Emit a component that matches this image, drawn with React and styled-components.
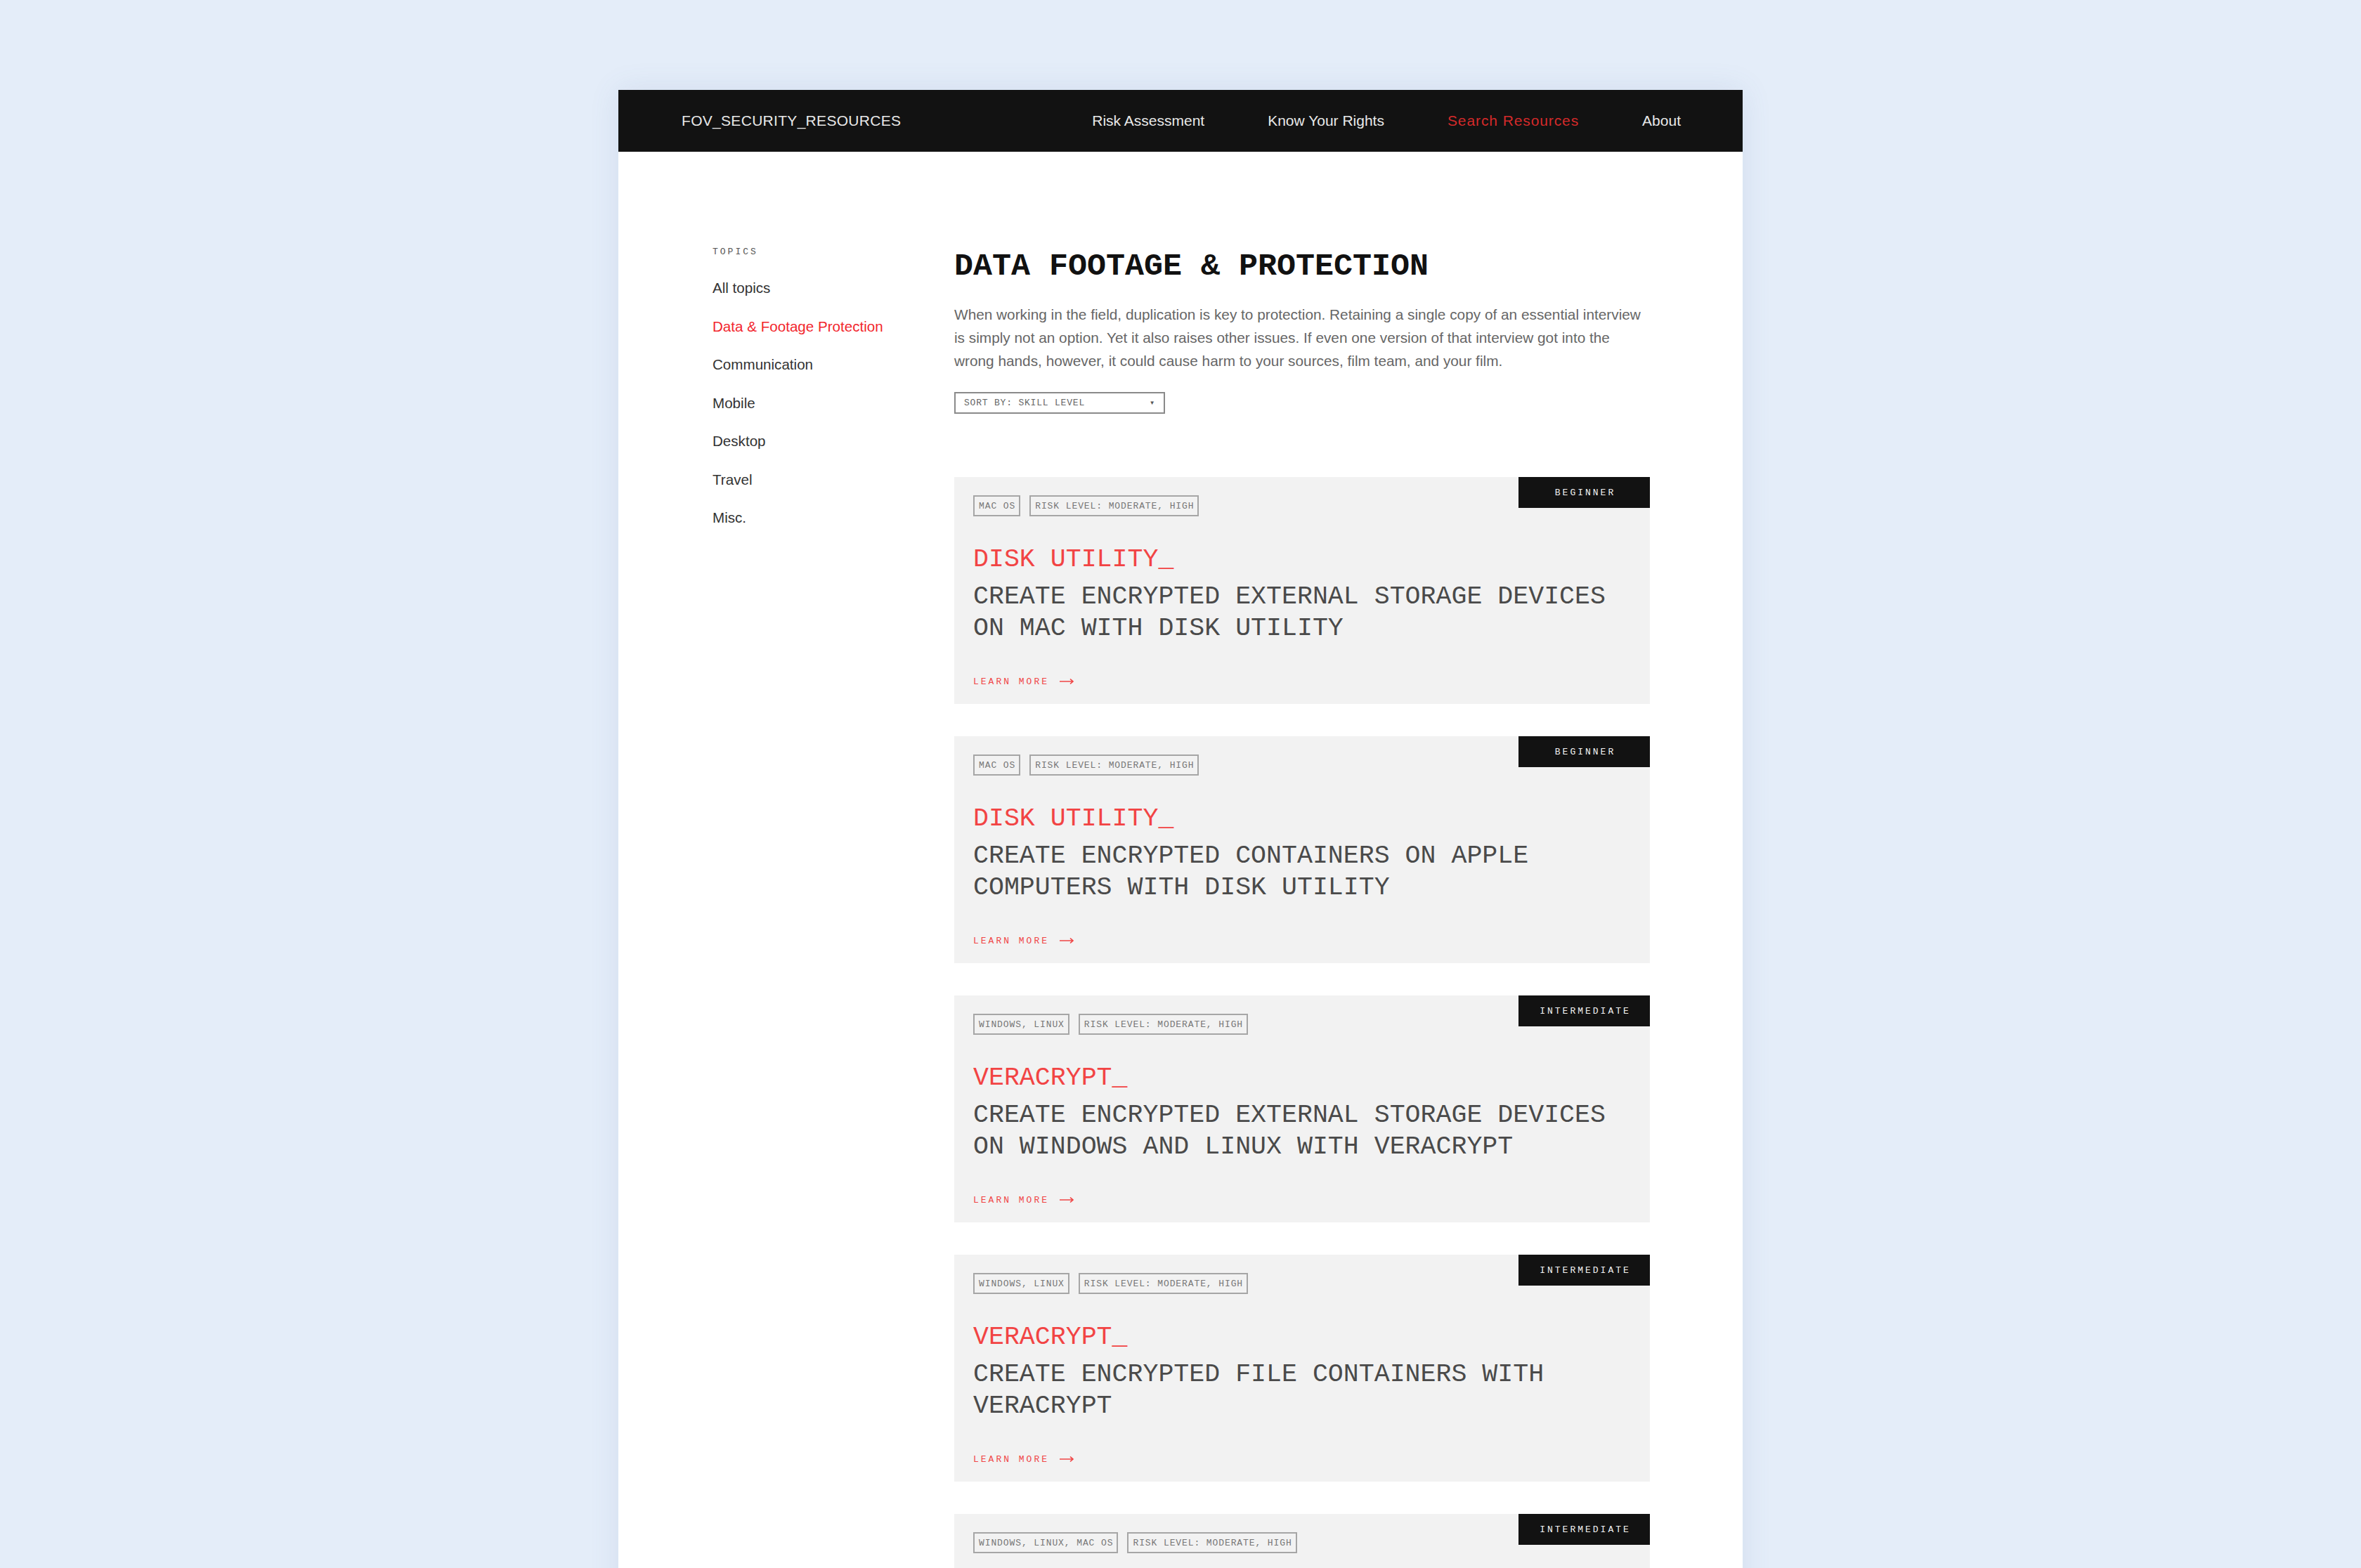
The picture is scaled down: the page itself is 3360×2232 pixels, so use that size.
import React from 'react';
import styled, { createGlobalStyle } from 'styled-components';

const GlobalStyle = createGlobalStyle`
  html, body {
    margin: 0;
    padding: 0;
  }
  body {
    background: #e4edf9;
    font-family: "Liberation Sans", Arial, sans-serif;
    overflow: hidden;
  }
  * {
    box-sizing: border-box;
  }
`;

const MONO = `"Liberation Mono", "DejaVu Sans Mono", monospace`;

const topics = [
  'All topics',
  'Data & Footage Protection',
  'Communication',
  'Mobile',
  'Desktop',
  'Travel',
  'Misc.',
];

const resources = [
  {
    tags: ['MAC OS', 'RISK LEVEL: MODERATE, HIGH'],
    level: 'BEGINNER',
    tool: 'DISK UTILITY_',
    title: 'CREATE ENCRYPTED EXTERNAL STORAGE DEVICES ON MAC WITH DISK UTILITY',
  },
  {
    tags: ['MAC OS', 'RISK LEVEL: MODERATE, HIGH'],
    level: 'BEGINNER',
    tool: 'DISK UTILITY_',
    title: 'CREATE ENCRYPTED CONTAINERS ON APPLE COMPUTERS WITH DISK UTILITY',
  },
  {
    tags: ['WINDOWS, LINUX', 'RISK LEVEL: MODERATE, HIGH'],
    level: 'INTERMEDIATE',
    tool: 'VERACRYPT_',
    title: 'CREATE ENCRYPTED EXTERNAL STORAGE DEVICES ON WINDOWS AND LINUX WITH VERACRYPT',
  },
  {
    tags: ['WINDOWS, LINUX', 'RISK LEVEL: MODERATE, HIGH'],
    level: 'INTERMEDIATE',
    tool: 'VERACRYPT_',
    title: 'CREATE ENCRYPTED FILE CONTAINERS WITH VERACRYPT',
  },
  {
    tags: ['WINDOWS, LINUX, MAC OS', 'RISK LEVEL: MODERATE, HIGH'],
    level: 'INTERMEDIATE',
    tool: 'VERACRYPT_',
    title: 'CREATE HIDDEN VOLUMES WITH VERACRYPT',
  },
];

const ArrowIcon = () => (
  <svg width="22" height="10" viewBox="0 0 22 10" fill="none">
    <path d="M1 5 H20 M16 1.5 L20 5 L16 8.5" stroke="currentColor" strokeWidth="1.6" />
  </svg>
);

const App = () => {
  return (
    <>
      <GlobalStyle />
      <Page>
        <NavBar>
          <Logo>FOV_SECURITY_RESOURCES</Logo>
          <NavLinks>
            <NavLink>Risk Assessment</NavLink>
            <NavLink>Know Your Rights</NavLink>
            <NavLink $active>Search Resources</NavLink>
            <NavLink>About</NavLink>
          </NavLinks>
        </NavBar>

        <Content>
          <Sidebar>
            <SidebarLabel>TOPICS</SidebarLabel>
            <TopicList>
              {topics.map((t, i) => (
                <TopicItem key={t} $active={i === 1}>{t}</TopicItem>
              ))}
            </TopicList>
          </Sidebar>

          <Main>
            <Heading>DATA FOOTAGE &amp; PROTECTION</Heading>
            <Intro>
              When working in the field, duplication is key to protection. Retaining a single copy of an
              essential interview is simply not an option. Yet it also raises other issues. If even one
              version of that interview got into the wrong hands, however, it could cause harm to your
              sources, film team, and your film.
            </Intro>
            <SortSelect>
              <span>SORT BY: SKILL LEVEL</span>
              <Caret>▾</Caret>
            </SortSelect>

            <CardList>
              {resources.map((r, i) => (
                <Card key={i}>
                  <LevelBadge>{r.level}</LevelBadge>
                  <TagRow>
                    {r.tags.map((tag) => (
                      <Tag key={tag}>{tag}</Tag>
                    ))}
                  </TagRow>
                  <ToolName>{r.tool}</ToolName>
                  <CardTitle>{r.title}</CardTitle>
                  <LearnMore>
                    LEARN MORE <ArrowIcon />
                  </LearnMore>
                </Card>
              ))}
            </CardList>
          </Main>
        </Content>
      </Page>
    </>
  );
};

const Page = styled.div`
  width: 1600px;
  margin: 128px auto 0;
  background: #ffffff;
  min-height: 2200px;
  box-shadow: 0 0 40px rgba(80, 110, 160, 0.12);
`;

const NavBar = styled.header`
  height: 88px;
  background: #121212;
  display: flex;
  align-items: center;
  justify-content: space-between;
  padding: 0 88px 0 90px;
`;

const Logo = styled.div`
  color: #e8e8e8;
  font-size: 21px;
  letter-spacing: 0.3px;
`;

const NavLinks = styled.nav`
  display: flex;
  align-items: center;
  gap: 90px;
`;

const NavLink = styled.a`
  font-size: 21px;
  color: ${(p) => (p.$active ? '#d42a2a' : '#e8e8e8')};
  letter-spacing: ${(p) => (p.$active ? '0.9px' : '0')};
  cursor: pointer;
`;

const Content = styled.div`
  display: grid;
  grid-template-columns: 344px 990px;
  padding: 137px 132px 0 134px;
`;

const Sidebar = styled.aside`
  display: flex;
  flex-direction: column;
  margin-top: -2px;
`;

const SidebarLabel = styled.div`
  font-family: ${MONO};
  font-size: 13px;
  line-height: 16px;
  letter-spacing: 3px;
  color: #555;
  margin-bottom: 16px;
`;

const TopicList = styled.ul`
  list-style: none;
  margin: 0;
  padding: 0;
`;

const TopicItem = styled.li`
  font-size: 20.6px;
  line-height: 54.5px;
  color: ${(p) => (p.$active ? '#f2262d' : '#333')};
  cursor: pointer;
`;

const Main = styled.main`
  display: flex;
  flex-direction: column;
  align-items: flex-start;
`;

const Heading = styled.h1`
  margin: 0;
  font-family: ${MONO};
  font-weight: 700;
  font-size: 45px;
  line-height: 54px;
  color: #111;
`;

const Intro = styled.p`
  margin: 24px 0 0;
  max-width: 990px;
  font-size: 20.8px;
  line-height: 33px;
  color: #666;
`;

const SortSelect = styled.div`
  margin-top: 28px;
  width: 300px;
  height: 31px;
  border: 2px solid #8a8a8a;
  display: flex;
  align-items: center;
  justify-content: space-between;
  padding: 0 12px 0 12px;
  font-family: ${MONO};
  font-size: 13px;
  letter-spacing: 0.8px;
  color: #666;
`;

const Caret = styled.span`
  font-size: 12px;
  color: #555;
`;

const CardList = styled.div`
  margin-top: 90px;
  width: 100%;
  display: flex;
  flex-direction: column;
  gap: 46px;
`;

const Card = styled.article`
  position: relative;
  background: #f2f2f2;
  padding: 26px 27px 22px;
`;

const LevelBadge = styled.div`
  position: absolute;
  top: 0;
  right: 0;
  width: 187px;
  height: 44px;
  background: #121212;
  color: #f2f2f2;
  display: flex;
  align-items: center;
  justify-content: center;
  font-family: ${MONO};
  font-size: 13px;
  letter-spacing: 3px;
  padding-left: 3px;
`;

const TagRow = styled.div`
  display: flex;
  gap: 13px;
`;

const Tag = styled.span`
  height: 30px;
  border: 2px solid #a6a6a6;
  display: inline-flex;
  align-items: center;
  padding: 0 5px 0 6px;
  font-family: ${MONO};
  font-size: 13px;
  letter-spacing: 0.9px;
  color: #777;
`;

const ToolName = styled.div`
  margin-top: 39px;
  font-family: ${MONO};
  font-size: 36.6px;
  line-height: 45px;
  color: #f24444;
`;

const CardTitle = styled.h2`
  margin: 8px 0 0;
  max-width: 936px;
  font-family: ${MONO};
  font-weight: 400;
  font-size: 36.6px;
  line-height: 45px;
  color: #4a4a4a;
`;

const LearnMore = styled.a`
  margin-top: 43px;
  display: flex;
  align-items: center;
  gap: 14px;
  height: 20px;
  font-family: ${MONO};
  font-size: 13px;
  letter-spacing: 3px;
  color: #f04646;
  cursor: pointer;
`;

export default App;
